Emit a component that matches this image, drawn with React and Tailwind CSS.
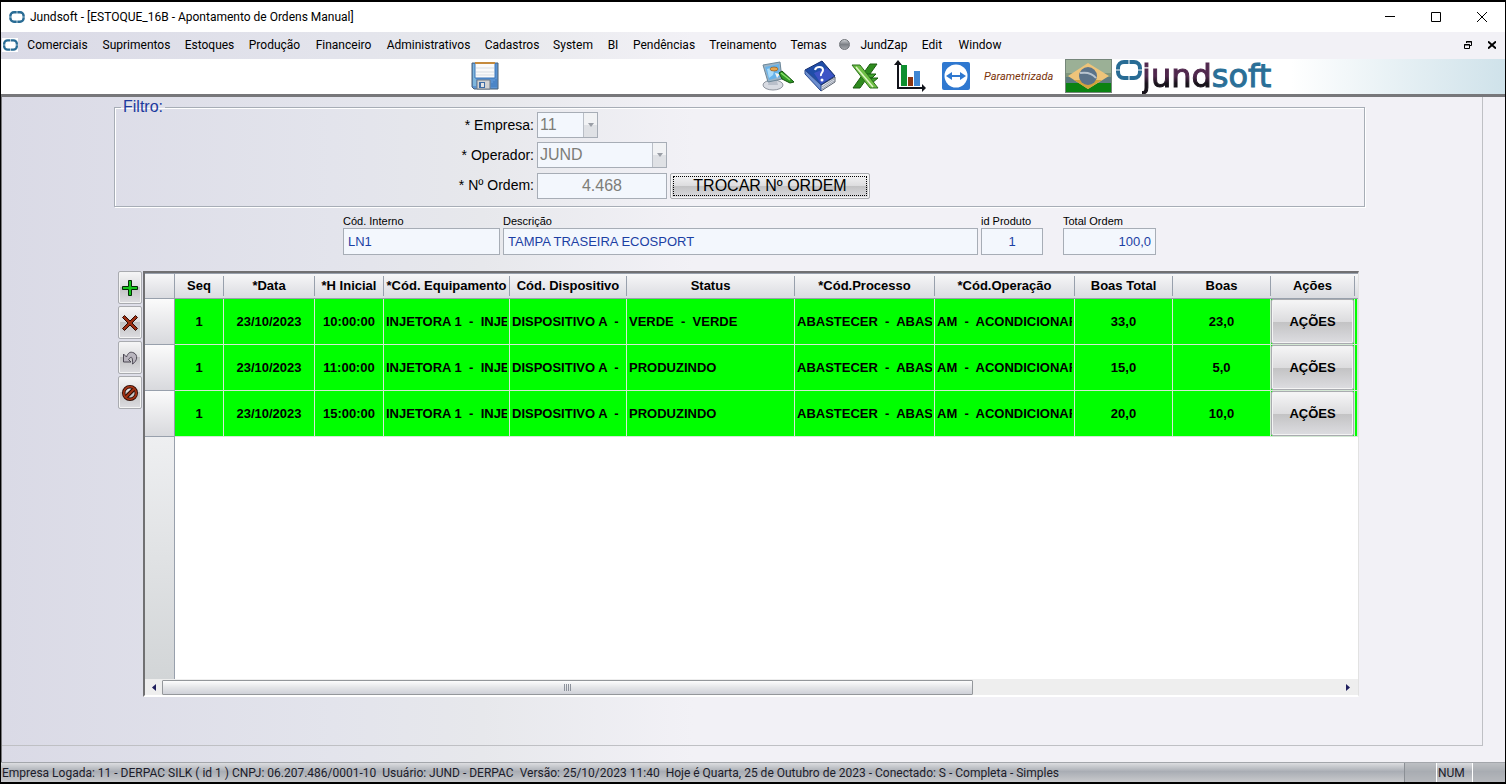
import { useState } from 'react';

const menuItems = [
  { label: 'Comerciais', width: 'w-[75px]' },
  { label: 'Suprimentos', width: 'w-[83px]' },
  { label: 'Estoques', width: 'w-[63px]' },
  { label: 'Produção', width: 'w-[67px]' },
  { label: 'Financeiro', width: 'w-[71px]' },
  { label: 'Administrativos', width: 'w-[99px]' },
  { label: 'Cadastros', width: 'w-[68px]' },
  { label: 'System', width: 'w-[54px]' },
  { label: 'BI', width: 'w-[26px]' },
  { label: 'Pendências', width: 'w-[76px]' },
  { label: 'Treinamento', width: 'w-[82px]' },
  { label: 'Temas', width: 'w-[49px]' },
  { label: 'JundZap', width: 'w-[81px]', dot: true },
  { label: 'Edit', width: 'w-[36px]' },
  { label: 'Window', width: 'w-[60px]' },
];

const columns = [
  { label: 'Seq', width: 'w-[49px]' },
  { label: '*Data', width: 'w-[91px]' },
  { label: '*H Inicial', width: 'w-[69px]' },
  { label: '*Cód. Equipamento', width: 'w-[126px]' },
  { label: 'Cód. Dispositivo', width: 'w-[117px]' },
  { label: 'Status', width: 'w-[168px]' },
  { label: '*Cód.Processo', width: 'w-[140px]' },
  { label: '*Cód.Operação', width: 'w-[140px]' },
  { label: 'Boas Total', width: 'w-[98px]' },
  { label: 'Boas', width: 'w-[98px]' },
  { label: 'Ações', width: 'w-[84px]' },
];

const rows = [
  { hora: '10:00:00', status: 'VERDE  -  VERDE', total: '33,0', boas: '23,0' },
  { hora: '11:00:00', status: 'PRODUZINDO', total: '15,0', boas: '5,0' },
  { hora: '15:00:00', status: 'PRODUZINDO', total: '20,0', boas: '10,0' },
];

const GLOSSY =
  'border border-[#a9abb0] rounded-[2px] shadow-[inset_0_0_0_1px_#f4f4f4] bg-[linear-gradient(#f6f6f7,#dcdcde_50%,#c2c2c3_50%,#dddde1)]';
const FIELD = 'border border-[#a7adb6] bg-[#f3f7fd]';

const RingIcon = ({ className }) => (
  <svg viewBox="0 0 26 20" className={className} fill="none" stroke="#286b94" strokeWidth="4">
    <path d="M12.500 2H8a6 6 0 0 0-6 6v1.500M2 10.500v1.500a6 6 0 0 0 6 6h4.500M13.500 18h4.500a6 6 0 0 0 6-6v-1.500M24 9.500V8a6 6 0 0 0-6-6h-4.500" />
  </svg>
);

const SaveIcon = () => (
  <svg viewBox="0 0 28 28" className="size-7">
    <path d="M1 1h26v26H3l-2-2z" fill="#5b93d2" stroke="#4a6076" />
    <path d="M2 2h3v22H2z" fill="#7fb6dc" />
    <path d="M4 1h20v15H4z" fill="#fafafa" stroke="#3c76b8" />
    <path d="M4 0h20v2H4z" fill="#c58a3c" />
    <path d="M5 6h18M5 10h18M5 13h18" stroke="#d8dde2" />
    <path d="M6 18h13v9H6z" fill="#d2d2d2" stroke="#6c7a88" />
    <path d="M8 20h6v6H8z" fill="#3f6da6" />
    <path d="M10 21h3v4h-3z" fill="#e4e4e4" />
    <path d="M21 25v-4M23 25v-6M25 25v-8" stroke="#3f78bc" />
  </svg>
);

const ThemeIcon = () => (
  <svg viewBox="0 0 32 30" className="h-[30px] w-8">
    <ellipse cx="11" cy="24" rx="10" ry="5" fill="#d8dbe2" stroke="#8e949e" />
    <path d="M7 20h8l1 4H6z" fill="#b9bfca" />
    <path d="M1 4l17-3 2 17-14 3z" fill="#9db4c6" stroke="#6c8799" />
    <path d="M3 6l14-3 1 13-11 3z" fill="#67b3ea" />
    <path d="M5 8l8-2-2 8-4 3z" fill="#a9dbfa" />
    <ellipse cx="12" cy="8" rx="4" ry="2" fill="#e8a34a" stroke="#8a5a24" strokeWidth=".7" />
    <path d="M13 12l5 1-3 4z" fill="#f3f3f3" />
    <path d="M17 12l3-2 12 11-4 1-8-4z" fill="#2f9a25" stroke="#14520e" />
    <path d="M19 12l9 7" stroke="#8be06c" strokeWidth="1.500" />
  </svg>
);

const HelpIcon = () => (
  <svg viewBox="0 0 32 32" className="size-8">
    <path d="M1 11l16 20 14-9v-5L17 25z" fill="#dfe2ea" stroke="#5a6270" />
    <path d="M1 10L18 1l13 15-14 9z" fill="#1f4da8" stroke="#132c6b" />
    <path d="M1 10l16 15v6L1 14z" fill="#6c8ecf" stroke="#2c4c93" />
    <path d="M10 13l13-5 7 8-13 8z" fill="#4a55d2" opacity=".7" />
    <path d="M18 29l12-8M18 27l12-8" stroke="#9aa2b0" />
    <path d="M11 10c1-4 8-4 8 0 0 3-3 3-2 6" fill="none" stroke="#fff" strokeWidth="2" />
    <circle cx="18" cy="20" r="1.5" fill="#fff" />
  </svg>
);

const ExcelIcon = () => (
  <svg viewBox="0 0 30 28" className="h-7 w-[30px]">
    <path d="M27 2h-7L3 26h7z" fill="#2e8b1e" stroke="#1b5c10" />
    <path d="M15 12h11l-4 4h-6zM18 16h10l-6 5z" fill="#3da02c" stroke="#1b5c10" />
    <path d="M2 3h8l18 23h-8z" fill="#6fbf45" stroke="#2a6f1c" />
    <path d="M6 5l17 20" stroke="#dff5c6" strokeWidth="1.500" />
  </svg>
);

const ChartIcon = () => (
  <svg viewBox="0 0 32 32" className="size-8">
    <path d="M4 4v25M3 28h26" stroke="#11131a" strokeWidth="2" />
    <path d="M0 5l4-5 4 5zM28 24l4 4-4 4z" fill="#11131a" />
    <path d="M7 5h6v21H7z" fill="#0f8f2f" />
    <path d="M14 17h5v9h-5z" fill="#8a3512" />
    <path d="M20 11h6v15h-6z" fill="#3f86d2" />
  </svg>
);

const RemoteIcon = () => (
  <svg viewBox="0 0 28 28" className="size-7">
    <rect width="28" height="28" rx="2" fill="#2f78d0" />
    <circle cx="14" cy="14" r="11.500" fill="#fff" />
    <path d="M4 14l6-4v3h8v-3l6 4-6 4v-3h-8v3z" fill="#2f78d0" />
  </svg>
);

const FlagIcon = () => (
  <svg viewBox="0 0 47 34" className="h-[34px] w-[47px]">
    <rect width="47" height="34" fill="#9bb096" />
    <path d="M0 14h47v4H0z" fill="#7f967c" />
    <path d="M0 18h47v6H0z" fill="#5d7a80" />
    <path d="M0 24h47v10H0z" fill="#0b8212" />
    <path d="M23 4l21 13-21 13L3 17z" fill="#eec47a" />
    <path d="M9 21h28L23 30z" fill="#d2a23c" />
    <circle cx="23" cy="17" r="9" fill="#5c7389" />
    <path d="M15 14c6-1 12 0 16 5" stroke="#b9c4cf" strokeWidth="2" fill="none" />
    <rect x=".5" y=".5" width="46" height="33" fill="none" stroke="#75867a" />
  </svg>
);

const AddIcon = () => (
  <svg viewBox="0 0 16 16" className="size-4">
    <path d="M6.5.5h3v6h6v3h-6v6h-3v-6h-6v-3h6z" fill="#15c51b" stroke="#062b07" />
  </svg>
);

const DeleteIcon = () => (
  <svg viewBox="0 0 16 16" className="size-4">
    <path d="M2.500.5L8 6l5.500-5.500 2 2L10 8l5.500 5.500-2 2L8 10l-5.500 5.500-2-2L6 8 .5 2.500z" fill="#9c2d10" stroke="#2b0b04" />
  </svg>
);

const UndoIcon = () => (
  <svg viewBox="0 0 16 16" className="size-4">
    <path d="M1.500 4v8H9L6.500 9.500C9 6 11 6 10.500 14c5-3 5.500-9 1.500-11S6 3 4.500 7z" fill="#b9b5be" stroke="#4c4854" />
  </svg>
);

const CancelIcon = () => (
  <svg viewBox="0 0 16 16" className="size-4" fill="none">
    <circle cx="8" cy="8" r="6.300" stroke="#2b0b04" strokeWidth="3.400" />
    <path d="M4 12l8-8" stroke="#2b0b04" strokeWidth="4" />
    <circle cx="8" cy="8" r="6.300" stroke="#a33214" strokeWidth="1.800" />
    <path d="M4 12l8-8" stroke="#a33214" strokeWidth="2" />
  </svg>
);

const TitleBar = () => (
  <header className="flex h-[30px] items-center bg-white pl-2 text-black">
    <RingIcon className="h-3 w-4" />
    <h1 className="ml-[5px] flex-1 text-[12px]">Jundsoft - [ESTOQUE_16B - Apontamento de Ordens Manual]</h1>
    <button aria-label="Minimizar" className="flex h-full w-[46px] items-center justify-center">
      <svg viewBox="0 0 10 10" className="size-2.5" stroke="#000"><path d="M0 4.500h10" /></svg>
    </button>
    <button aria-label="Maximizar" className="flex h-full w-[46px] items-center justify-center">
      <svg viewBox="0 0 10 10" className="size-2.5" stroke="#000" fill="none"><path d="M.5.5h9v9h-9z" /></svg>
    </button>
    <button aria-label="Fechar" className="flex h-full w-[46px] items-center justify-center">
      <svg viewBox="0 0 10 10" className="size-2.5" stroke="#000"><path d="M0 0l10 10M10 0L0 10" /></svg>
    </button>
  </header>
);

const MenuBar = () => (
  <nav className="flex h-[27px] items-center pb-0.5 pl-px text-[12px] text-black">
    <span className="flex h-3.5 w-4 items-center justify-center bg-white">
      <RingIcon className="h-3 w-[15px]" />
    </span>
    <div className="ml-0.5 flex flex-1">
      {menuItems.map((item) => (
        <button key={item.label} className={`flex items-center justify-center whitespace-nowrap ${item.width}`}>
          {item.dot && (
            <span className="mr-2.5 size-[11px] rounded-full border border-[#6f7378] bg-[linear-gradient(#c9ccd0,#7c8086_50%,#a5a8ad)]" />
          )}
          {item.label}
        </button>
      ))}
    </div>
    <button aria-label="Restaurar janela" className="mr-4">
      <svg viewBox="0 0 8 8" className="size-2" stroke="#000" fill="none">
        <path d="M2.500 2V.5h5v4H6M2 1h6" />
        <path d="M.5 3.500h5v4h-5zM0 4h6" />
      </svg>
    </button>
    <button aria-label="Fechar janela" className="mr-[9px]">
      <svg viewBox="0 0 8 8" className="size-2" stroke="#000" strokeWidth="2"><path d="M0 .5l8 7M8 .5l-8 7" /></svg>
    </button>
  </nav>
);

const Toolbar = () => (
  <div className="flex h-[35px] items-center bg-[linear-gradient(90deg,#fff_1290px,#e6f0f4_1400px,#cfe2ea)] pb-0.5">
    <button aria-label="Salvar" className="ml-[470px]"><SaveIcon /></button>
    <button aria-label="Aparência" className="ml-[263px]"><ThemeIcon /></button>
    <button aria-label="Ajuda" className="ml-2.5"><HelpIcon /></button>
    <button aria-label="Exportar para Excel" className="ml-3.5"><ExcelIcon /></button>
    <button aria-label="Gráficos" className="ml-3.5"><ChartIcon /></button>
    <button aria-label="Acesso remoto" className="ml-4"><RemoteIcon /></button>
    <a href="#parametrizada" className="ml-3.5 w-[69px] pt-1 text-center text-[11px] text-[#7a3208] italic">
      Parametrizada
    </a>
    <span className="ml-3"><FlagIcon /></span>
    <div className="ml-1 flex items-start self-start">
      <RingIcon className="mt-px h-5 w-[26px]" />
      <span className="font-['DejaVu_Sans',sans-serif] text-[32px] leading-[35px] text-[#2a6f97] [-webkit-text-stroke:1px]">
        <span className="bg-[linear-gradient(#50274d_50%,#17121a_70%)] bg-clip-text text-transparent">jund</span>soft
      </span>
    </div>
  </div>
);

const SelectField = ({ id, label, value, width }) => (
  <>
    <label htmlFor={id} className="text-right text-[14px] text-black">* {label}:</label>
    <div className={`flex h-[26px] ${FIELD} ${width}`}>
      <select id={id} disabled className="min-w-0 flex-1 appearance-none pl-0.5 text-[16px] text-[#7d7d78] opacity-100">
        <option>{value}</option>
      </select>
      <span className="flex w-3.5 items-center justify-center border-l border-[#b9bec6] bg-[linear-gradient(#f1f2f4_50%,#dfe1e5_50%)]">
        <svg viewBox="0 0 6 4" className="h-1 w-1.5"><path d="M0 0h6L3 4z" fill="#9a9ea6" /></svg>
      </span>
    </div>
  </>
);

const FilterPanel = ({ ordem, onTrocar }) => (
  <fieldset className="mr-[117px] ml-28 min-w-0 border border-[#a7adb6] pb-[7px] shadow-[1px_1px_0_#fff,inset_1px_1px_0_#fff]">
    <legend className="ml-1.5 px-0.5 text-[16px] leading-[10px] text-[#1c3a9e]">Filtro:</legend>
    <div className="grid grid-cols-[419px_1fr] items-center gap-x-[3px] gap-y-1">
      <SelectField id="empresa" label="Empresa" value="11" width="w-[61px]" />
      <SelectField id="operador" label="Operador" value="JUND" width="w-[130px]" />
      <label htmlFor="ordem" className="text-right text-[14px] text-black">* Nº Ordem:</label>
      <div className="flex items-end gap-[3px]">
        <input id="ordem" disabled value={ordem} className={`h-[26px] w-[130px] text-center text-[16px] text-[#7d7d78] ${FIELD}`} />
        <button type="button" onClick={onTrocar} className={`mt-px h-[26px] w-[200px] p-0.5 text-[16px] text-black ${GLOSSY}`}>
          <span className="flex h-full items-center justify-center border border-dotted border-black">TROCAR Nº ORDEM</span>
        </button>
      </div>
    </div>
  </fieldset>
);

const ProductField = ({ id, label, value, width, align = '' }) => (
  <div className={`flex flex-col ${width}`}>
    <label htmlFor={id} className="text-[11px] leading-[14px] whitespace-nowrap text-black">{label}</label>
    <input id={id} readOnly value={value} className={`h-[27px] w-full px-1 text-[13px] text-[#1c3fa4] ${FIELD} ${align}`} />
  </div>
);

const DataGrid = () => (
  <div className="flex min-w-0 flex-1 flex-col overflow-hidden border-t-2 border-r border-b-2 border-l-2 border-t-[#707072] border-r-[#e2e2e2] border-b-white border-l-[#707072] bg-white">
    <table className="w-full table-fixed border-separate border-spacing-0 text-[13px] font-bold text-black">
      <colgroup>
        <col className="w-[30px]" />
        {columns.map((col) => <col key={col.label} className={col.width} />)}
        <col />
      </colgroup>
      <thead>
        <tr className="h-[26px] bg-[linear-gradient(#f8f8f9,#d9dadf)]">
          <th className="border-t border-r border-b border-[#98a0ac] p-0" />
          {columns.map((col) => (
            <th key={col.label} className="border-t border-b border-[#98a0ac] p-0">
              <span className="flex h-5 items-center justify-center border-r border-[#98a0ac] whitespace-nowrap">{col.label}</span>
            </th>
          ))}
          <th className="border-t border-b border-[#98a0ac] p-0" />
        </tr>
      </thead>
      <tbody>
        {rows.map((row) => (
          <tr
            key={row.hora}
            className="h-[46px] bg-[#00ff00] text-center whitespace-pre [&>td]:overflow-hidden [&>td]:border-r [&>td]:border-b [&>td]:border-[#d4e8d4] [&>td]:p-0"
          >
            <th className="border-r border-b border-[#98a0ac] bg-[linear-gradient(#fbfbfb,#d8d9dd)] p-0" />
            <td>1</td>
            <td>23/10/2023</td>
            <td>{row.hora}</td>
            <td className="text-left"><span className="mx-0.5 block overflow-hidden">{'INJETORA 1  -  INJE'}</span></td>
            <td className="text-left"><span className="mx-0.5 block overflow-hidden">{'DISPOSITIVO A  -'}</span></td>
            <td className="text-left"><span className="mx-0.5 block overflow-hidden">{row.status}</span></td>
            <td className="text-left"><span className="mx-0.5 block overflow-hidden">{'ABASTECER  -  ABAS'}</span></td>
            <td className="text-left"><span className="mx-0.5 block overflow-hidden">{'AM  -  ACONDICIONAR'}</span></td>
            <td>{row.total}</td>
            <td>{row.boas}</td>
            <td><button className={`block h-[45px] w-full ${GLOSSY}`}>AÇÕES</button></td>
            <td />
          </tr>
        ))}
      </tbody>
    </table>
    <div className="w-[30px] flex-1 border-r border-[#98a0ac] bg-[linear-gradient(#eeeff1,#d2d5d7)]" />
    <div className="flex h-4 items-center bg-[#eeeeee]">
      <button aria-label="Rolar para a esquerda" className="flex w-[17px] justify-center">
        <svg viewBox="0 0 4 7" className="h-[7px] w-1"><path d="M4 0v7L0 3.500z" fill="#1f1f5e" /></svg>
      </button>
      <div className="flex flex-1">
        <div className="flex h-[15px] w-[69%] items-center justify-center gap-px rounded-[1px] border border-[#94979b] bg-[linear-gradient(#fdfdfd,#e4e5e8_50%,#cfd1d8)]">
          {[0, 1, 2, 3].map((n) => <span key={n} className="h-[7px] w-px bg-[#8d929c]" />)}
        </div>
      </div>
      <button aria-label="Rolar para a direita" className="flex w-5 justify-center">
        <svg viewBox="0 0 4 7" className="h-[7px] w-1"><path d="M0 0v7l4-3.500z" fill="#1f1f5e" /></svg>
      </button>
    </div>
  </div>
);

const StatusBar = () => (
  <footer className="flex h-5 items-center overflow-hidden border-t border-[#a3a6ab] bg-[linear-gradient(#dcdde0,#a9adb4_45%,#c9cacd)] text-[12px] whitespace-nowrap text-[#1c1c2a]">
    <span className="mr-1.5 pl-px">Empresa Logada: 11 - DERPAC SILK ( id 1 ) CNPJ: 06.207.486/0001-10</span>
    <span className="mr-1.5">Usuário: JUND - DERPAC</span>
    <span className="mr-1.5">Versão: 25/10/2023 11:40</span>
    <span className="flex-1">Hoje é Quarta, 25 de Outubro de 2023 - Conectado: S - Completa - Simples</span>
    <span className="h-full w-8 border-l border-[#8b8f95] bg-[#a9acb1]/60" />
    <span className="flex h-full w-9 items-center border-l border-white pl-px">NUM</span>
    <span className="h-full w-[33px] border-l border-white bg-[#a9acb1]/60" />
  </footer>
);

const App = () => {
  const [ordem, setOrdem] = useState('4.468');

  return (
    <div className="flex min-h-screen flex-col border-x border-y-2 border-black bg-[linear-gradient(90deg,#dadae6,#e3e4ec_22%,#e7e8ec_32%,#f2f1f6_46%)] font-['Roboto',sans-serif]">
      <TitleBar />
      <MenuBar />
      <Toolbar />
      <main className="flex flex-1 flex-col border-t-[3px] border-l border-[#77777a] pb-4 font-['Liberation_Sans',Arial,sans-serif]">
        <div className="mr-[22px] flex flex-1 flex-col border-r border-b border-[#bfc0c4] pt-[5px] pb-12">
          <FilterPanel ordem={ordem} onTrocar={() => setOrdem('')} />
          <div className="mt-[7px] mr-[326px] ml-[341px] flex gap-[3px]">
            <ProductField id="codigo" label="Cód. Interno" value="LN1" width="w-[157px]" />
            <ProductField id="descricao" label="Descrição" value="TAMPA TRASEIRA ECOSPORT" width="flex-1" />
            <ProductField id="produto" label="id Produto" value="1" width="w-[62px]" align="text-center" />
            <ProductField id="total" label="Total Ordem" value="100,0" width="ml-[17px] w-[93px]" align="text-right" />
          </div>
          <div className="mt-4 mr-[123px] ml-[116px] flex flex-1 gap-px">
            <div className="flex w-6 flex-col gap-0.5">
              <button aria-label="Adicionar" className={`flex h-[33px] items-center justify-center ${GLOSSY}`}><AddIcon /></button>
              <button aria-label="Excluir" className={`flex h-[33px] items-center justify-center ${GLOSSY}`}><DeleteIcon /></button>
              <button aria-label="Desfazer" className={`flex h-[33px] items-center justify-center ${GLOSSY}`}><UndoIcon /></button>
              <button aria-label="Cancelar" className={`flex h-[33px] items-center justify-center ${GLOSSY}`}><CancelIcon /></button>
            </div>
            <DataGrid />
          </div>
        </div>
      </main>
      <StatusBar />
    </div>
  );
};

export default App;
